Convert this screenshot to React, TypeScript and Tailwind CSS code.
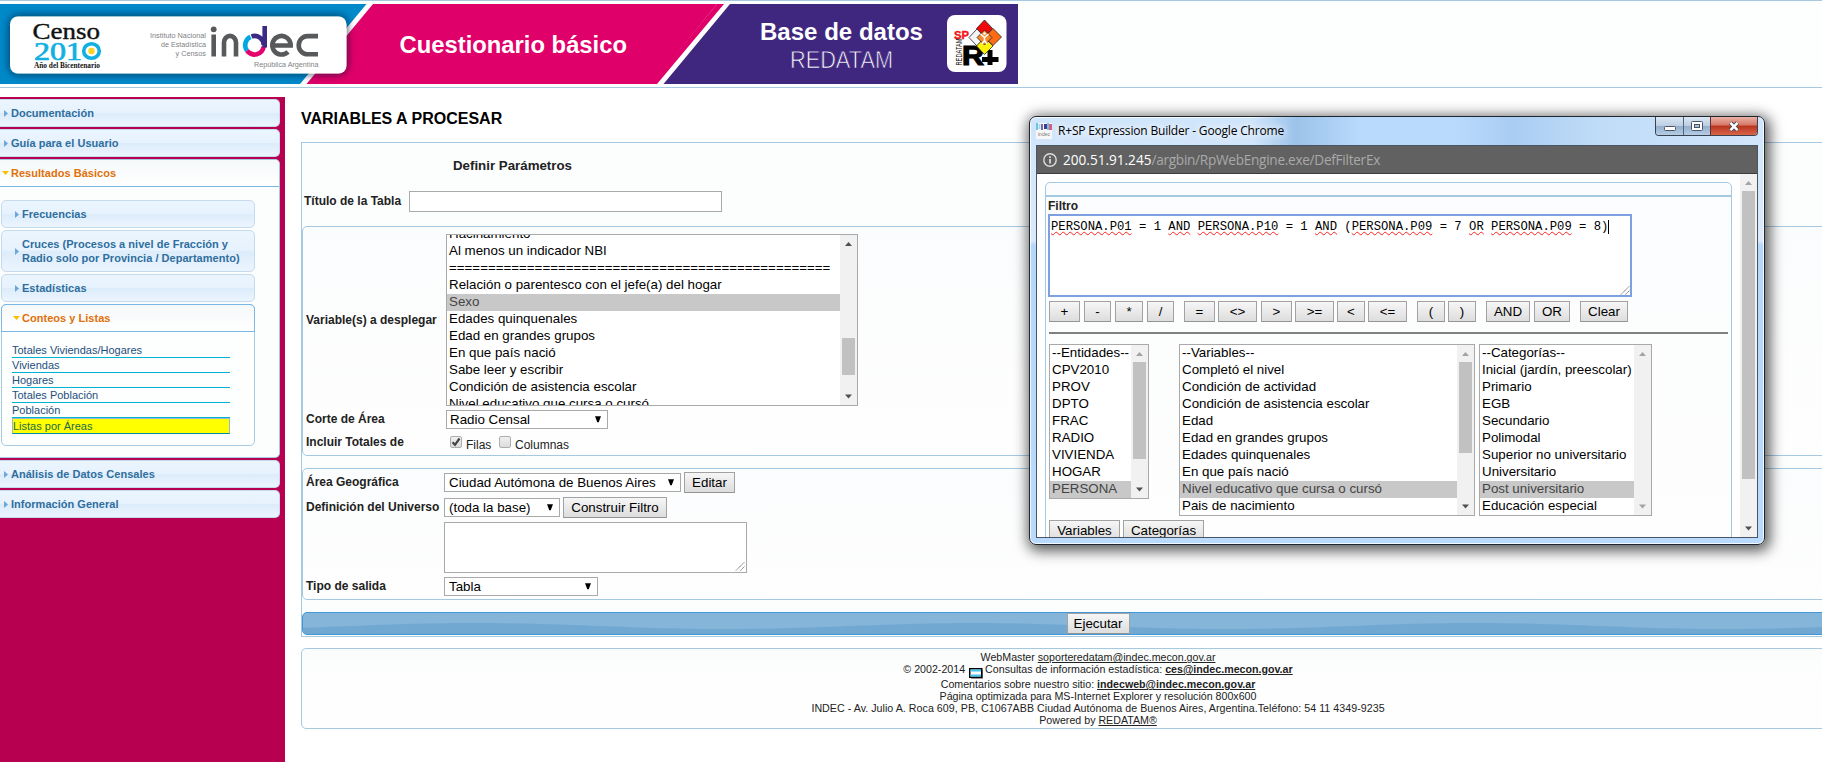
import React from "react";

const SANS = "font-['Liberation_Sans',Arial,sans-serif]";

function Banner() {
  return (
    <svg width="1018" height="80" viewBox="0 4 1018 80" className="block" role="img">
      <defs>
        <filter id="cardShadow" x="-10%" y="-30%" width="120%" height="160%">
          <feDropShadow dx="0" dy="0" stdDeviation="4.5" floodColor="#001830" floodOpacity="0.85" />
        </filter>
      </defs>
      <rect x="0" y="4" width="1018" height="80" fill="#fff" />
      <polygon points="0,4 366.5,4 300,84 0,84" fill="#0089c9" />
      <polygon points="373,4 717,4 652,84 306.500,84" fill="#df0069" />
      <polygon points="717,4 724,4 657,84 651,84" fill="#df0069" />
      <polygon points="730,4 1018,4 1018,84 663.500,84" fill="#3f277f" />
      <rect x="10" y="16.500" width="336.500" height="57" rx="8" fill="#fff" filter="url(#cardShadow)" />

      <g fontFamily="'Liberation Serif', serif" fill="#111">
        <text x="32.500" y="38.500" fontSize="24" textLength="67.500" lengthAdjust="spacingAndGlyphs" stroke="#111" strokeWidth="0.4">Censo</text>
        <text x="34" y="59.500" fontSize="25.500" textLength="48" lengthAdjust="spacingAndGlyphs" fill="#12b0e2" stroke="#12b0e2" strokeWidth="0.7">201</text>
        <text x="34" y="67.500" fontSize="8" fontWeight="bold" textLength="66" lengthAdjust="spacingAndGlyphs">Año del Bicentenario</text>
      </g>
      <ellipse cx="91.500" cy="51" rx="7.800" ry="7.300" fill="#fff" stroke="#12b0e2" strokeWidth="3.600" />
      <circle cx="91.500" cy="51" r="3.200" fill="#fbd21f" />

      <g fontFamily="'Liberation Sans', sans-serif" fill="#808285" fontSize="6.500">
        <text x="150" y="38" textLength="56" lengthAdjust="spacingAndGlyphs">Instituto Nacional</text>
        <text x="161" y="47" textLength="45" lengthAdjust="spacingAndGlyphs">de Estadística</text>
        <text x="175.500" y="56" textLength="30.500" lengthAdjust="spacingAndGlyphs">y Censos</text>
        <text x="254" y="67" textLength="64.500" lengthAdjust="spacingAndGlyphs">República Argentina</text>
      </g>

      <g fill="none" strokeWidth="4.600">
        <path d="M213.700 34.500V56.500" stroke="#58595b" />
        <path d="M224 56.500V42.500a6 6.600 0 0 1 12 0V56.500" stroke="#58595b" />
        <path d="M250.500 36.800A9.300 9.300 0 0 0 247 50.700" stroke="#00a7e1" />
        <path d="M247 50.700A9.300 9.300 0 0 0 263.700 46.500" stroke="#e5006d" />
        <path d="M251.500 36.400A9.300 9.300 0 0 1 263.800 45.200M264.700 26V47.500" stroke="#3a2a86" />
        <path d="M273 45.500H290.700A9.200 9.300 0 1 0 288 51.800" stroke="#58595b" />
        <path d="M318 36.100H307.500a8.800 9.100 0 0 0 0 18.200H318" stroke="#58595b" />
      </g>
      <circle cx="213.700" cy="29.300" r="2.900" fill="#58595b" />

      <g fontFamily="'Liberation Sans', sans-serif" fill="#fff">
        <text x="399.500" y="52.500" fontSize="24" fontWeight="bold" textLength="227.500" lengthAdjust="spacingAndGlyphs">Cuestionario básico</text>
        <text x="760" y="39.500" fontSize="24" fontWeight="bold" textLength="163" lengthAdjust="spacingAndGlyphs">Base de datos</text>
        <text x="790" y="67.800" fontSize="24" textLength="103" lengthAdjust="spacingAndGlyphs" stroke="#3f277f" strokeWidth="0.750">REDATAM</text>
      </g>

      <rect x="947" y="15" width="59.500" height="57" rx="8" fill="#fff" />
      <g fontFamily="'Liberation Sans', sans-serif">
        <text x="954" y="38.500" fontSize="11.500" fontWeight="bold" fill="#f5121a" stroke="#f5121a" strokeWidth="0.4" textLength="15" lengthAdjust="spacingAndGlyphs">SP</text>
        <text transform="translate(961.5 65.500) rotate(-90)" fontSize="9.500" fill="#111" textLength="27" lengthAdjust="spacingAndGlyphs">REDATAM</text>
        <text x="962" y="65" fontSize="27" fontWeight="bold" fill="#000" stroke="#000" strokeWidth="1.200" textLength="22" lengthAdjust="spacingAndGlyphs">R</text>
      </g>
      <path d="M990 50V65M982 59.500H998.500" stroke="#000" strokeWidth="5" />
      <g stroke="#222" strokeWidth="0.8">
        <path d="M984.500 20L992.500 28.500L984.500 37L976.500 28.500Z" fill="#f3060c" />
        <path d="M977 29L985 37.500L977 46L969 37.500Z" fill="#f7f7f7" />
        <path d="M993 28.500L1001.500 37L993 45.500L984.500 37Z" fill="#ff6b13" />
        <path d="M984.500 37.500L993 46L984.500 54.500L976.500 46Z" fill="#fff20a" />
        <path d="M984.500 30L992 37.500L984.500 45L977 37.500Z" fill="#f98a2b" />
      </g>
      <path d="M980.500 34l4 3.500l4-3.500M984.500 37v3.500l-2.500 3.500M984.500 40.500l2.500 3.500" stroke="#fff" strokeWidth="1.500" fill="none" />
      <circle cx="984.500" cy="33.500" r="1.300" fill="#fff" />
    </svg>
  );
}

const headBg = "bg-[linear-gradient(#ebf5fe_0%,#e6f2fd_48%,#ddecfa_52%,#ebf5ff_100%)]";

function RightTri() {
  return (
    <svg width="4" height="7" viewBox="0 0 4 7" className="block shrink-0">
      <path d="M0 0L4 3.500L0 7Z" fill="#6da8d5" />
    </svg>
  );
}
function DownTri() {
  return (
    <svg width="7" height="4" viewBox="0 0 7 4" className="block shrink-0">
      <path d="M0 0H7L3.500 4Z" fill="#f9bd01" />
    </svg>
  );
}

function TopItem({ label }: { label: string }) {
  return (
    <div className={`mb-[2px] flex h-[28px] w-[280px] items-center gap-[3px] rounded-r-[5px] border border-l-0 border-[#c5dbec] pl-[4px] text-[#2e6e9e] ${headBg}`}>
      <RightTri />
      <span>{label}</span>
    </div>
  );
}
function SubItem({ label, tall }: { label: React.ReactNode; tall?: boolean }) {
  return (
    <div className={`mb-[2px] flex w-[254px] items-center gap-[3px] rounded-[5px] border border-[#c5dbec] pl-[13px] leading-[14px] text-[#2e6e9e] ${tall ? "h-[42px]" : "h-[28px]"} ${headBg}`}>
      <RightTri />
      <span>{label}</span>
    </div>
  );
}

function Sidebar() {
  const links = ["Totales Viviendas/Hogares", "Viviendas", "Hogares", "Totales Población", "Población"];
  return (
    <aside className="h-[665px] w-[285px] shrink-0 whitespace-nowrap bg-[#b80050] pt-[2px] text-[11px] font-bold tracking-[0.030px]">
      <TopItem label="Documentación" />
      <TopItem label="Guía para el Usuario" />
      <div className="mb-[2px] h-[299px] w-[280px] rounded-r-[5px] border border-l-0 border-[#a6c9e2] bg-[#fcfdfd]">
        <div className="flex h-[27px] items-center gap-[2px] rounded-tr-[4px] border-b border-[#79b7e7] bg-[linear-gradient(#f5f8f9,#ffffff)] pl-[2px] text-[#e17009]">
          <DownTri />
          <span>Resultados Básicos</span>
        </div>
        <div className="pl-[1px] pt-[13px]">
          <SubItem label="Frecuencias" />
          <SubItem tall label={<>Cruces (Procesos a nivel de Fracción y<br />Radio solo por Provincia / Departamento)</>} />
          <SubItem label="Estadísticas" />
          <div className="h-[142px] w-[254px] rounded-[5px] border border-[#a6c9e2] bg-[#fdfefe]">
            <div className="-mx-px -mt-px flex h-[28px] items-center gap-[2px] rounded-t-[5px] border border-[#79b7e7] bg-[linear-gradient(#f5f8f9,#ffffff)] pl-[11px] text-[#e17009]">
              <DownTri />
              <span>Conteos y Listas</span>
            </div>
            <div className="ml-[10px] mt-[11px] w-[218px] font-normal tracking-[0px] text-[#1d4f7c]">
              {links.map((l) => (
                <div key={l} className="h-[15px] border-b border-[#00b2d4] leading-[14px]">{l}</div>
              ))}
              <div className="h-[16px] border border-[#9ab8c6] border-b-[#008c9c] bg-[#ffff00] leading-[15px] text-[#1e6a4a]">Listas por Áreas</div>
            </div>
          </div>
        </div>
      </div>
      <TopItem label="Análisis de Datos Censales" />
      <TopItem label="Información General" />
    </aside>
  );
}

function Arrow({ up, dim }: { up?: boolean; dim?: boolean }) {
  return (
    <svg width="17" height="17" viewBox="0 0 17 17" className="block">
      <path d={up ? "M5 11L8.500 7L12 11Z" : "M5 6.500L8.500 10.500L12 6.500Z"} fill={dim ? "#a3a3a3" : "#505050"} />
    </svg>
  );
}

interface ListProps {
  items: string[];
  selected: string;
  box: string;
  thumb?: string;
  shift?: string;
  dimUp?: boolean;
  dimDown?: boolean;
}
function ListBox({ items, selected, box, thumb, shift, dimUp, dimDown }: ListProps) {
  return (
    <div className={`flex shrink-0 overflow-hidden border border-[#a9a9a9] bg-white text-[13.333px] text-black ${box}`}>
      <div className={`min-w-0 flex-1 ${shift ?? ""}`}>
        {items.map((t) => (
          <div key={t} className={`h-[17px] whitespace-nowrap pl-[2px] leading-[15px] ${t === selected ? "bg-[#c8c8c8] text-[#444]" : ""}`}>{t}</div>
        ))}
      </div>
      <div className="flex w-[17px] shrink-0 flex-col items-center justify-between bg-[#f1f1f1]">
        <Arrow up dim={dimUp} />
        {thumb && <div className={`w-[13px] bg-[#c1c1c1] ${thumb}`} />}
        {thumb && <div className="flex-1" />}
        <Arrow dim={dimDown} />
      </div>
    </div>
  );
}

function Select({ value, box }: { value: string; box: string }) {
  return (
    <div className={`flex h-[19px] shrink-0 items-center justify-between border border-[#a9a9a9] bg-white pr-[6px] text-[13.333px] leading-[17px] text-black ${box}`}>
      <span className="whitespace-nowrap">{value}</span>
      <svg width="6" height="7" viewBox="0 0 6 7" className="block shrink-0"><path d="M0 0.300H6L3.700 6.300H2.300Z" fill="#000" /></svg>
    </div>
  );
}

function Btn({ children, box }: { children: React.ReactNode; box: string }) {
  return (
    <button className={`h-[21px] shrink-0 whitespace-nowrap border border-[#a2a2a2] border-b-[#949494] bg-[linear-gradient(#f6f6f6,#dddddd)] text-center text-[13.333px] leading-[19px] text-black ${box}`}>{children}</button>
  );
}

function Grip() {
  return (
    <svg width="10" height="10" viewBox="0 0 10 10" className="block">
      <path d="M1 9.500L9.500 1M5.500 9.500L9.500 5.500" stroke="#666" strokeWidth="1" strokeDasharray="1.200 0.500" />
    </svg>
  );
}

function Check({ on }: { on?: boolean }) {
  return (
    <span className="flex h-[12px] w-[12px] items-center justify-center rounded-[2px] border border-[#adadad] bg-[linear-gradient(#f0f0f0,#dcdcdc)]">
      {on && <svg width="10" height="10" viewBox="0 0 10 10"><path d="M1.500 5.200L4 7.800L8.500 1.500" stroke="#444" strokeWidth="2.200" fill="none" /></svg>}
    </span>
  );
}

function Label({ children, box }: { children: React.ReactNode; box: string }) {
  return <span className={`shrink-0 whitespace-nowrap text-[12px] font-bold text-[#222] ${box}`}>{children}</span>;
}

const mainVars = [
  "Hacinamiento", "Al menos un indicador NBI", "=================================================",
  "Relación o parentesco con el jefe(a) del hogar", "Sexo", "Edades quinquenales", "Edad en grandes grupos",
  "En que país nació", "Sabe leer y escribir", "Condición de asistencia escolar", "Nivel educativo que cursa o cursó",
];

function wavePath() {
  let d = "M0 24";
  for (let x = 0; x <= 1594; x += 8) {
    const y = 13 - 3 * Math.cos(((x - 172) / 500) * Math.PI * 2);
    d += `L${x} ${y.toFixed(2)}`;
  }
  return d + "L1594 24Z";
}

function Form() {
  return (
    <div className="h-[495px] w-[1594px] border border-[#a6c9e2] bg-[#fcfdfd]">
      <div className="flex h-[48px] pl-[151px] pt-[14px]">
        <span className="whitespace-nowrap text-[13.300px] font-bold leading-[18px] text-[#222]">Definir Parámetros</span>
      </div>
      <div className="flex h-[35px] items-start">
        <Label box="ml-[2px] w-[105px] pt-[1px] leading-[18px]">Título de la Tabla</Label>
        <input className="h-[21px] w-[313px] border border-[#a9a9a9] bg-white" />
      </div>

      <section className="h-[230px] rounded-[5px] border border-[#a6c9e2] bg-[linear-gradient(#fbfcfd,#fefefe)] pl-[3px] pt-[7px]">
        <div className="flex h-[176px] items-start">
          <Label box="w-[140px] pt-[77px] leading-[18px]">Variable(s) a desplegar</Label>
          <ListBox items={mainVars} selected="Sexo" box="h-[172px] w-[412px]" shift="-mt-[9px]" thumb="mt-[86px] h-[37px]" />
        </div>
        <div className="flex h-[23px] items-start">
          <Label box="w-[140px] leading-[18px]">Corte de Área</Label>
          <Select value="Radio Censal" box="w-[162px] pl-[3px]" />
        </div>
        <div className="flex items-start">
          <Label box="w-[140px] leading-[18px]">Incluir Totales de</Label>
          <div className="flex items-start pl-[4px] pt-[3px] text-[12px] leading-[18px] text-[#222]">
            <Check on /><span className="ml-[4px] w-[33px]">Filas</span><Check /><span className="ml-[4px]">Columnas</span>
          </div>
        </div>
      </section>

      <section className="mt-[12px] h-[132px] rounded-[5px] border border-[#a6c9e2] bg-[linear-gradient(#fbfcfd,#fefefe)] pl-[3px] pt-[3px]">
        <div className="flex h-[25px] items-start">
          <Label box="w-[138px] pt-[1px] leading-[18px]">Área Geográfica</Label>
          <Select value="Ciudad Autómona de Buenos Aires" box="mt-px w-[237px] pl-[4px]" />
          <Btn box="ml-[3px] w-[51px]">Editar</Btn>
        </div>
        <div className="flex h-[25px] items-start">
          <Label box="w-[138px] pt-[1px] leading-[18px]">Definición del Universo</Label>
          <Select value="(toda la base)" box="mt-px w-[116px] pl-[4px]" />
          <Btn box="ml-[3px] w-[104px]">Construir Filtro</Btn>
        </div>
        <div className="ml-[138px] flex h-[51px] w-[303px] items-end justify-end border border-[#a9a9a9] bg-white p-px"><Grip /></div>
        <div className="flex items-start pt-[4px]">
          <Label box="w-[138px] leading-[18px]">Tipo de salida</Label>
          <Select value="Tabla" box="w-[154px] pl-[4px]" />
        </div>
      </section>

      <div className="relative mt-[12px] flex h-[23px] justify-center overflow-hidden rounded-[5px] border border-[#4297d7] bg-[#86b5da]">
        <svg width="1594" height="23" className="absolute left-0 top-0"><path d={wavePath()} fill="#71a8d2" /></svg>
        <Btn box="relative w-[63px]">Ejecutar</Btn>
      </div>
    </div>
  );
}

function Footer() {
  return (
    <footer className="mt-[11px] h-[81px] w-[1594px] whitespace-nowrap rounded-[5px] border border-[#a6c9e2] bg-[linear-gradient(#fafcfc,#fefefe_40%)] pt-[2px] text-center text-[10.667px] leading-[12px] text-[#222]">
      <div className="h-[12px]">WebMaster <u>soporteredatam@indec.mecon.gov.ar</u></div>
      <div className="flex h-[15px] items-start justify-center">
        <span>© 2002-2014</span>
        <svg width="15" height="12" viewBox="0 0 15 12" className="ml-[4px] mr-[1px] mt-[5px] block">
          <rect x="2" y="2" width="12" height="9" fill="#999" />
          <rect x="0.750" y="0.750" width="12" height="8.500" fill="#fff" stroke="#000" strokeWidth="1.500" />
          <path d="M1.500 2.500h10.500M1.500 7.500h10.500" stroke="#3cc5f5" strokeWidth="2.200" />
        </svg>
        <span>Consultas de información estadística: <b className="underline">ces@indec.mecon.gov.ar</b></span>
      </div>
      <div className="h-[12px]">Comentarios sobre nuestro sitio: <b className="underline">indecweb@indec.mecon.gov.ar</b></div>
      <div className="h-[12px]">Página optimizada para MS-Internet Explorer y resolución 800x600</div>
      <div className="h-[12px] tracking-[0.035px]">INDEC - Av. Julio A. Roca 609, PB, C1067ABB Ciudad Autónoma de Buenos Aires, Argentina.Teléfono: 54 11 4349-9235</div>
      <div className="h-[12px]">Powered by <u>REDATAM®</u></div>
    </footer>
  );
}

function Sq({ children }: { children: string }) {
  return <span className="underline decoration-[#ff2020] decoration-wavy decoration-[0.800px] underline-offset-[1px] [text-decoration-skip-ink:none]">{children}</span>;
}

function Popup() {
  const ops: [string, string][] = [
    ["+", "w-[31px]"], ["-", "ml-[4px] w-[27px]"], ["*", "ml-[4px] w-[28px]"], ["/", "ml-[4px] w-[27px]"],
    ["=", "ml-[10px] w-[31px]"], ["<>", "ml-[3px] w-[39px]"], [">", "ml-[4px] w-[31px]"], [">=", "ml-[3px] w-[39px]"],
    ["<", "ml-[3px] w-[28px]"], ["<=", "ml-[3px] w-[39px]"], ["(", "ml-[10px] w-[28px]"], [")", "ml-[3px] w-[28px]"],
    ["AND", "ml-[10px] w-[44px]"], ["OR", "ml-[4px] w-[36px]"], ["Clear", "ml-[10px] w-[48px]"],
  ];
  return (
    <div className="absolute left-[1029px] top-[116px] flex h-[429px] w-[736px] flex-col rounded-[7px] border border-[#20262e] bg-[linear-gradient(#cfe5fb_0%,#dbeafa_29%,#b5d7fb_30%,#b9dafc_100%)] px-[6px] pb-[6px] shadow-[2px_3px_14px_3px_rgba(0,0,0,0.65),inset_0_0_0_1px_rgba(255,255,255,0.8)]">
      <div className="flex h-[28px] items-start bg-[linear-gradient(90deg,transparent_30%,#9cc3ea_36%,#b9dafc_45%,#b9dafc_58%,#a9cdf2_66%,#c0dcf8_78%,transparent)]">
        <svg width="16" height="16" viewBox="0 0 16 16" className="mt-[6px] shrink-0">
          <rect width="16" height="16" fill="#f7f7f7" />
          <path d="M0 0h2v7h-2zM11 0h2v7h-2z" fill="#6cc5e6" /><path d="M2.500 1h2v5h-2z" fill="#9ed7ea" />
          <path d="M5 1h2v6h-2z" fill="#7a6aa8" /><path d="M8 1h3v5h-3z" fill="#423a8e" /><path d="M13 1h3v6h-3z" fill="#dd5c7c" />
          <text x="2" y="13" fontSize="5" fontFamily="Liberation Sans, sans-serif" fill="#777">indec</text>
        </svg>
        <span className="ml-[6px] mt-[5px] whitespace-nowrap font-['Open_Sans','Noto_Sans',sans-serif] text-[12px] leading-[18px] tracking-[-0.180px] text-black [text-shadow:0_0_8px_#fff,0_0_8px_#fff]">R+SP Expression Builder - Google Chrome</span>
        <div className="ml-auto flex h-[19px] w-[103px] overflow-hidden rounded-b-[4px] border border-t-0 border-[#39434f]">
          <div className="flex w-[28px] items-center justify-center border-r border-[#53647a] bg-[linear-gradient(#dbe7f4_0%,#bccfe3_48%,#95aecb_52%,#b5cde6_100%)]">
            <svg width="12" height="5" className="mt-[4px]"><rect x=".5" y=".5" width="11" height="4" rx="1" fill="#fff" stroke="#4b5566" /></svg>
          </div>
          <div className="flex w-[27px] items-center justify-center border-r border-[#5c3034] bg-[linear-gradient(#dbe7f4_0%,#bccfe3_48%,#95aecb_52%,#b5cde6_100%)]">
            <svg width="12" height="10"><rect x=".5" y=".5" width="11" height="9" rx="1" fill="#fff" stroke="#4b5566" /><rect x="3.500" y="3.500" width="5" height="3" fill="#a9c0da" stroke="#4b5566" /></svg>
          </div>
          <div className="flex flex-1 items-center justify-center bg-[linear-gradient(#eab1a6_0%,#d67867_45%,#b8341f_50%,#d9654a_100%)]">
            <svg width="12" height="11" viewBox="0 0 12 11"><path d="M2.500 1.800L9.500 9.200M9.500 1.800L2.500 9.200" stroke="#4b4b58" strokeWidth="4.200" /><path d="M2.500 1.800L9.500 9.200M9.500 1.800L2.500 9.200" stroke="#fff" strokeWidth="2.500" /></svg>
          </div>
        </div>
      </div>
      <div className="flex min-h-0 flex-1 flex-col overflow-hidden border border-[#4a5563] bg-white">
        <div className="flex h-[28px] shrink-0 items-center border-b border-[#3c3c3c] bg-[#616161] pl-[6px]">
          <svg width="14" height="14" viewBox="0 0 14 14" className="shrink-0"><circle cx="7" cy="7" r="6.200" fill="none" stroke="#ddd" strokeWidth="1.400" /><path d="M7 6v4.500M7 3.300v1.600" stroke="#ddd" strokeWidth="1.700" /></svg>
          <span className="ml-[6px] whitespace-nowrap font-['Open_Sans','Noto_Sans',sans-serif] text-[13.600px] leading-[20px] tracking-[-0.270px] text-[#a9a9a9]"><span className="tracking-normal text-white">200.51.91.245</span>/argbin/RpWebEngine.exe/DefFilterEx</span>
        </div>
        <div className="flex min-h-0 flex-1">
          <div className="min-w-0 flex-1 overflow-hidden pl-[8px] pt-[8px]">
            <div className="h-[400px] w-[687px] rounded-t-[5px] border border-[#a6c9e2] bg-[linear-gradient(#fbfcfd,#fefefe)]">
              <div className="h-[14px] border-b-2 border-[#a6c9e2]" />
              <div className="pl-[3px]">
                <div className="-ml-px h-[17px] pt-px text-[12px] font-bold leading-[16px] text-[#222]">Filtro</div>
                <div className="-ml-px flex h-[83px] w-[584px] items-start border-2 border-[#7da0e0] bg-white pl-px">
                  <div className="flex-1 whitespace-pre pt-[2px] font-['Liberation_Mono',monospace] text-[12.220px] leading-[18px] text-black"><Sq>PERSONA.P01</Sq> = 1 <Sq>AND</Sq> <Sq>PERSONA.P10</Sq> = 1 <Sq>AND</Sq> (<Sq>PERSONA.P09</Sq> = 7 <Sq>OR</Sq> <Sq>PERSONA.P09</Sq> = 8)<span className="inline-block h-[14px] w-px bg-black align-middle" /></div>
                  <div className="self-end"><Grip /></div>
                </div>
                <div className="mt-[4px] flex">{ops.map(([t, b]) => <Btn key={t} box={b}>{t}</Btn>)}</div>
                <div className="mt-[10px] h-[2px] w-[679px] bg-[#808080]" />
                <div className="mt-[10px] flex items-start">
                  <ListBox items={["--Entidades--", "CPV2010", "PROV", "DPTO", "FRAC", "RADIO", "VIVIENDA", "HOGAR", "PERSONA"]} selected="PERSONA" box="h-[155px] w-[100px]" thumb="h-[97px]" dimUp />
                  <ListBox items={["--Variables--", "Completó el nivel", "Condición de actividad", "Condición de asistencia escolar", "Edad", "Edad en grandes grupos", "Edades quinquenales", "En que país nació", "Nivel educativo que cursa o cursó", "Pais de nacimiento"]} selected="Nivel educativo que cursa o cursó" box="ml-[30px] h-[172px] w-[296px]" thumb="h-[91px]" dimUp />
                  <ListBox items={["--Categorías--", "Inicial (jardín, preescolar)", "Primario", "EGB", "Secundario", "Polimodal", "Superior no universitario", "Universitario", "Post universitario", "Educación especial"]} selected="Post universitario" box="ml-[4px] h-[172px] w-[173px]" dimUp dimDown />
                </div>
                <div className="mt-[4px] flex gap-[3px]"><Btn box="w-[71px]">Variables</Btn><Btn box="w-[81px]">Categorías</Btn></div>
              </div>
            </div>
          </div>
          <div className="flex w-[17px] shrink-0 flex-col items-center bg-[#f1f1f1]">
            <Arrow up dim />
            <div className="h-[288px] w-[13px] bg-[#c1c1c1]" />
            <div className="flex-1" />
            <Arrow />
          </div>
        </div>
      </div>
    </div>
  );
}

export default function App() {
  return (
    <div className={`relative h-[762px] w-full overflow-hidden bg-white ${SANS}`}>
      <header className="h-[88px] w-full border-b border-[#a6c9e2] bg-[#fdfefe]">
        <div className="mb-[3px] h-px bg-[#a6c9e2]" />
        <Banner />
      </header>
      <div className="flex pt-[9px]">
        <Sidebar />
        <main className="ml-[16px] shrink-0">
          <h1 className="h-[45px] whitespace-nowrap pt-[13px] text-[16px] font-bold leading-[18px] text-black">VARIABLES A PROCESAR</h1>
          <Form />
          <Footer />
        </main>
      </div>
      <Popup />
    </div>
  );
}
